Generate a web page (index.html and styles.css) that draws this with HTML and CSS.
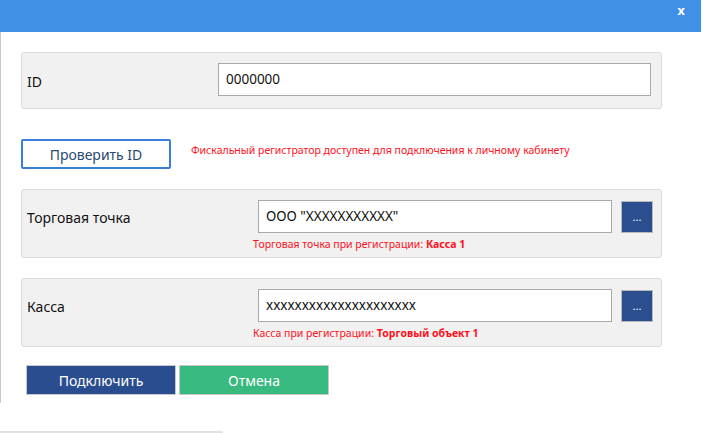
FILE: index.html
```html
<!DOCTYPE html>
<html lang="ru">
<head>
<meta charset="utf-8">
<title>Подключение</title>
<link rel="stylesheet" href="styles.css">
</head>
<body>
<div class="dialog">
  <div class="titlebar"><span class="close">x</span></div>
  <div class="content">
    <div class="panel panel-id">
      <div class="label">ID</div>
      <div class="input">0000000</div>
    </div>
    <div class="check-row">
      <button class="btn-check">Проверить ID</button>
      <div class="msg">Фискальный регистратор доступен для подключения к личному кабинету</div>
    </div>
    <div class="panel panel-field">
      <div class="label">Торговая точка</div>
      <div class="input">ООО "XXXXXXXXXXX"</div>
      <button class="btn-more">...</button>
      <div class="note">Торговая точка при регистрации: <b>Касса 1</b></div>
    </div>
    <div class="panel panel-field">
      <div class="label">Касса</div>
      <div class="input">xxxxxxxxxxxxxxxxxxxxx</div>
      <button class="btn-more">...</button>
      <div class="note">Касса при регистрации: <b>Торговый объект 1</b></div>
    </div>
    <div class="actions">
      <button class="btn btn-connect">Подключить</button>
      <button class="btn btn-cancel">Отмена</button>
    </div>
  </div>
</div>
<div class="bottom-line"></div>
</body>
</html>
```

FILE: styles.css
```css
* { box-sizing: border-box; }
html, body { margin: 0; padding: 0; background: #fff; }
body {
  width: 702px;
  height: 433px;
  overflow: hidden;
  font-family: "Noto Sans", "Open Sans", sans-serif;
  color: #111;
  position: relative;
}
.dialog {
  width: 701px;
  height: 403px;
  border-left: 1px solid #c8c8c8;
}
.titlebar {
  height: 32px;
  margin-left: -1px;
  background: #4190e8;
  display: flex;
  justify-content: flex-end;
  align-items: flex-start;
  padding: 5px 16px 0 0;
}
.close {
  color: #fff;
  font-weight: bold;
  font-size: 12px;
  font-family: "DejaVu Sans", sans-serif;
  line-height: 12px;
}
.content {
  padding: 20px 0 0 20px;
}
.panel {
  width: 641px;
  background: #f1f1f1;
  border: 1px solid #dadada;
  border-radius: 3px;
}
.label {
  font-size: 14px;
  padding-left: 5px;
}
.input {
  background: #fff;
  border: 1px solid #a9a9a9;
  height: 33px;
  font-size: 13.5px;
  line-height: 31px;
  padding-left: 7px;
}
.panel-id {
  height: 57px;
  display: flex;
  align-items: center;
  padding: 0 10px 0 0;
}
.panel-id .label { width: 196px; padding-top: 1px; }
.panel-id .input { flex: 1; margin-top: -2px; }

.check-row {
  display: flex;
  align-items: center;
  margin-top: 30px;
  gap: 20px;
}
.btn-check {
  width: 150px;
  height: 30px;
  background: #fff;
  border: 2px solid #3a7ed6;
  border-radius: 2px;
  color: #2b4a70;
  font-family: "Noto Sans", "Open Sans", sans-serif;
  font-size: 14px;
  padding: 0;
}
.msg {
  color: #ff1020;
  font-size: 10.5px;
  margin-top: -8px;
}
.panel-field {
  margin-top: 20px;
  display: grid;
  grid-template-columns: 227px 354px 32px;
  column-gap: 9px;
  padding: 10px 0 5px 0;
}
.panel-field .label { align-self: center; padding-top: 2px; }
.btn-more {
  width: 32px;
  height: 32px;
  margin-top: 1px;
  background: #2a4e8e;
  border: 1px solid #b8b8b8;
  color: #fff;
  font-size: 11px;
  padding: 0 0 1px 0;
  font-family: "Noto Sans", sans-serif;
}
.note {
  grid-column: 2 / 4;
  margin-left: -5px;
  margin-top: 4px;
  color: #ff1020;
  font-size: 10.5px;
  line-height: 15px;
}
.note b { font-weight: bold; }
.actions {
  display: flex;
  gap: 3px;
  margin-top: 18px;
  padding-left: 5px;
}
.btn {
  width: 150px;
  height: 30px;
  border: 1px solid #c8c8c8;
  color: #fff;
  font-family: "Noto Sans", "Open Sans", sans-serif;
  font-size: 14px;
  padding: 0;
}
.btn-connect { background: #2a4d8f; }
.btn-cancel { background: #38b97f; }
.bottom-line {
  position: absolute;
  left: 0;
  top: 431px;
  width: 223px;
  height: 2px;
  background: #e2e2e2;
}
```
